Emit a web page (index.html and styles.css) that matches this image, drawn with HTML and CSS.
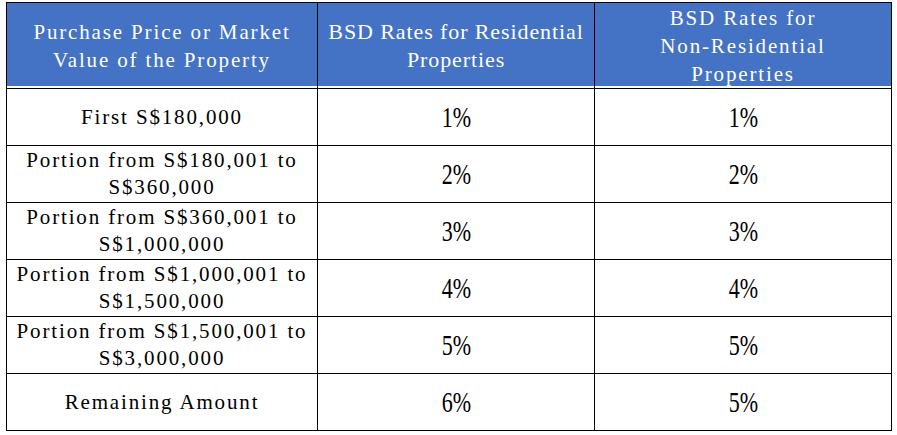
FILE: index.html
```html
<!DOCTYPE html>
<html>
<head>
<meta charset="utf-8">
<link rel="stylesheet" href="styles.css">
</head>
<body>
<table class="bsd">
  <colgroup>
    <col class="c1"><col class="c2"><col class="c3">
  </colgroup>
  <thead>
    <tr class="head">
      <th class="mono">Purchase Price or Market<br>Value of the Property</th>
      <th class="serif">BSD Rates for Residential<br>Properties</th>
      <th class="mono">BSD Rates for<br>Non-Residential<br>Properties</th>
    </tr>
  </thead>
  <tbody>
    <tr><td class="mono">First S$180,000</td><td class="pct"><span>1%</span></td><td class="pct"><span>1%</span></td></tr>
    <tr><td class="mono">Portion from S$180,001 to<br>S$360,000</td><td class="pct"><span>2%</span></td><td class="pct"><span>2%</span></td></tr>
    <tr><td class="mono">Portion from S$360,001 to<br>S$1,000,000</td><td class="pct"><span>3%</span></td><td class="pct"><span>3%</span></td></tr>
    <tr><td class="mono">Portion from S$1,000,001 to<br>S$1,500,000</td><td class="pct"><span>4%</span></td><td class="pct"><span>4%</span></td></tr>
    <tr><td class="mono">Portion from S$1,500,001 to<br>S$3,000,000</td><td class="pct"><span>5%</span></td><td class="pct"><span>5%</span></td></tr>
    <tr><td class="mono">Remaining Amount</td><td class="pct"><span>6%</span></td><td class="pct"><span>5%</span></td></tr>
  </tbody>
</table>
</body>
</html>
```
FILE: styles.css
```css
html, body {
  margin: 0;
  padding: 0;
  background: #fff;
}
body {
  padding: 2px 0 0 6px;
}
.bsd {
  border-collapse: collapse;
  table-layout: fixed;
  width: 885px;
}
.c1 { width: 311px; }
.c2 { width: 277px; }
.c3 { width: 297px; }
.bsd th, .bsd td {
  border: 1.5px solid #000;
  padding: 0;
  text-align: center;
  vertical-align: middle;
  color: #000;
}
.head th {
  height: 85px;
  background: #4472c4;
  color: #fff;
  font-weight: normal;
  box-shadow: inset 0 -2px 0 #fff;
}
.bsd tbody td {
  height: 56px;
}
.mono {
  font-family: "Liberation Serif", serif;
  font-size: 21px;
  letter-spacing: 1.85px;
  line-height: 27px;
  white-space: nowrap;
}
.head .mono {
  line-height: 28px;
}
.serif {
  font-family: "Liberation Serif", serif;
  font-size: 22px;
  letter-spacing: 0.9px;
  line-height: 28px;
  white-space: nowrap;
}
.pct span {
  display: inline-block;
  font-family: "Liberation Serif", serif;
  font-size: 29px;
  transform: scaleX(0.76);
}
```
